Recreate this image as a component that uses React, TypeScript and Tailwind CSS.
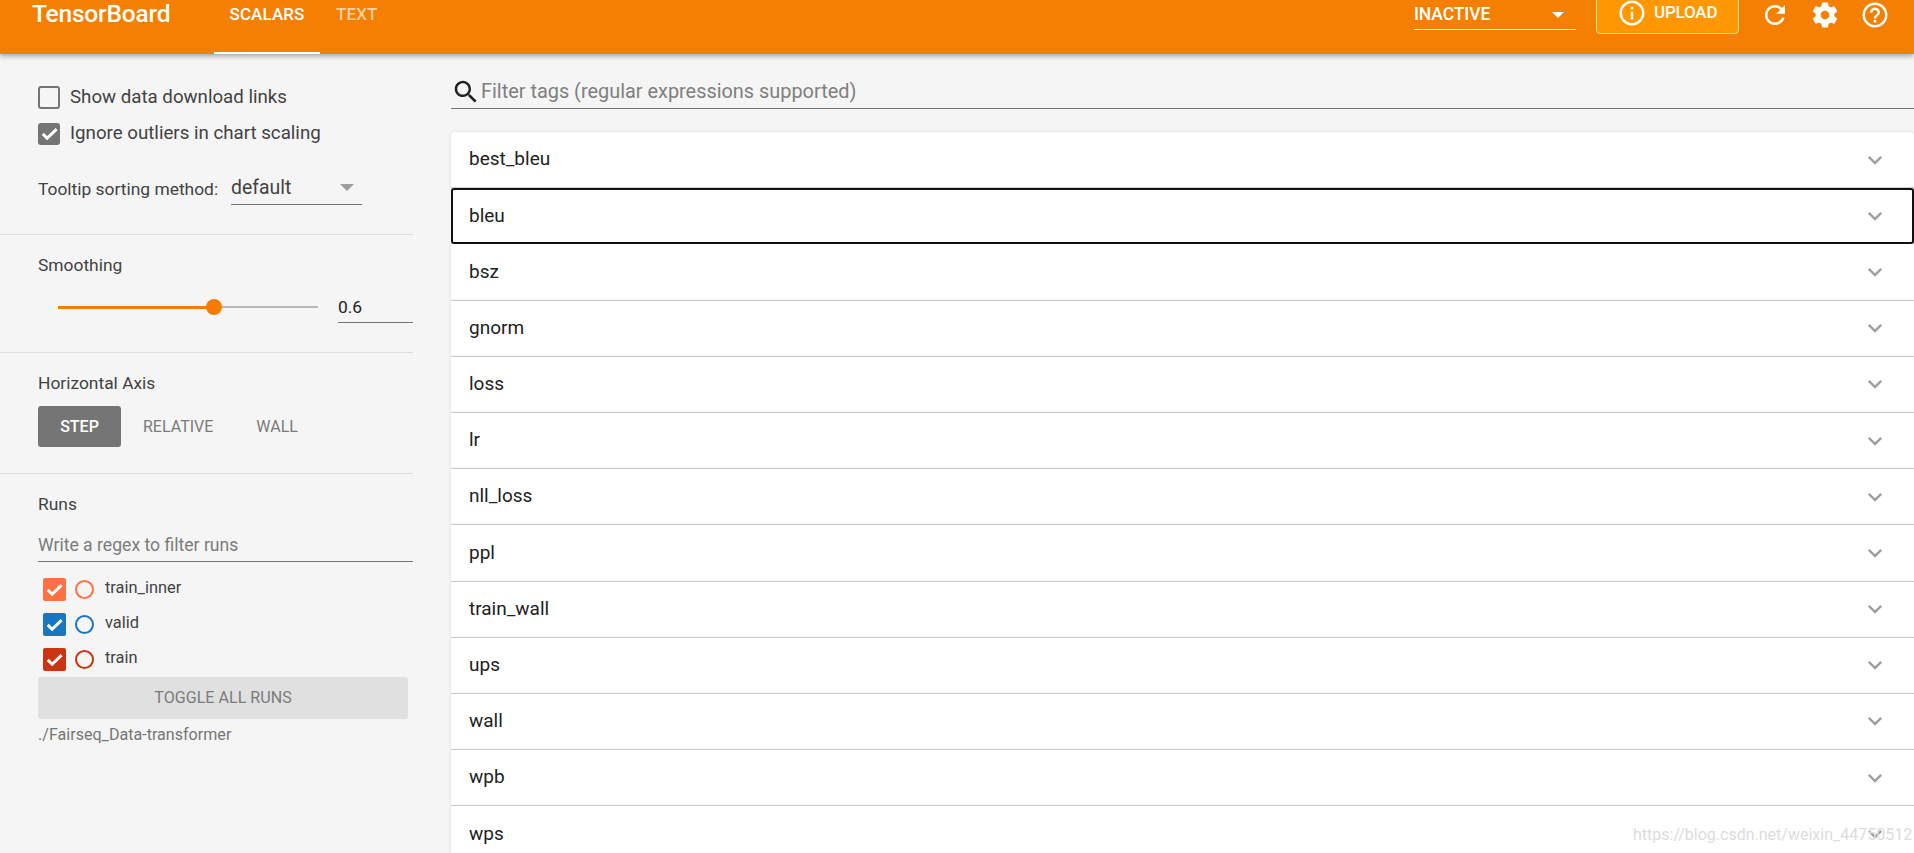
import React from "react";

const P = {
  refresh: "M17.65 6.35C16.2 4.9 14.21 4 12 4c-4.42 0-7.99 3.58-7.99 8s3.57 8 7.99 8c3.73 0 6.84-2.55 7.73-6h-2.08c-.82 2.33-3.04 4-5.65 4-3.31 0-6-2.69-6-6s2.69-6 6-6c1.66 0 3.14.69 4.22 1.78L13 11h7V4l-2.35 2.35z",
  settings: "M19.43 12.98c.04-.32.07-.64.07-.98s-.03-.66-.07-.98l2.11-1.65c.19-.15.24-.42.12-.64l-2-3.46c-.12-.22-.39-.3-.61-.22l-2.49 1c-.52-.4-1.08-.73-1.69-.98l-.38-2.65C14.46 2.18 14.25 2 14 2h-4c-.25 0-.46.18-.49.42l-.38 2.65c-.61.25-1.17.59-1.69.98l-2.49-1c-.23-.09-.49 0-.61.22l-2 3.46c-.13.22-.07.49.12.64l2.11 1.65c-.04.32-.07.65-.07.98s.03.66.07.98l-2.11 1.65c-.19.15-.24.42-.12.64l2 3.46c.12.22.39.3.61.22l2.49-1c.52.4 1.08.73 1.69.98l.38 2.65c.03.24.24.42.49.42h4c.25 0 .46-.18.49-.42l.38-2.65c.61-.25 1.17-.59 1.69-.98l2.49 1c.23.09.49 0 .61-.22l2-3.46c.12-.22.07-.49-.12-.64l-2.11-1.65zM12 15.5c-1.93 0-3.5-1.57-3.5-3.5s1.57-3.5 3.5-3.5 3.5 1.57 3.5 3.5-1.57 3.5-3.5 3.5z",
  help: "M11 18h2v-2h-2v2zm1-16C6.48 2 2 6.48 2 12s4.48 10 10 10 10-4.48 10-10S17.52 2 12 2zm0 18c-4.41 0-8-3.59-8-8s3.59-8 8-8 8 3.59 8 8-3.59 8-8 8zm0-14c-2.21 0-4 1.79-4 4h2c0-1.1.9-2 2-2s2 .9 2 2c0 2-3 1.75-3 5h2c0-2.25 3-2.5 3-5 0-2.21-1.79-4-4-4z",
  info: "M11 17h2v-6h-2v6zm1-15C6.48 2 2 6.48 2 12s4.48 10 10 10 10-4.48 10-10S17.52 2 12 2zm0 18c-4.41 0-8-3.59-8-8s3.59-8 8-8 8 3.59 8 8-3.59 8-8 8zM11 9h2V7h-2v2z",
  search: "M15.5 14h-.79l-.28-.27C15.41 12.59 16 11.11 16 9.5 16 5.91 13.09 3 9.5 3S3 5.91 3 9.5 5.91 16 9.5 16c1.61 0 3.09-.59 4.23-1.57l.27.28v.79l5 4.99L20.49 19l-4.99-5zm-6 0C7.01 14 5 11.99 5 9.5S7.01 5 9.5 5 14 7.01 14 9.5 11.99 14 9.5 14z",
  expand: "M16.59 8.59L12 13.17 7.41 8.59 6 10l6 6 6-6z",
};

function Icon({ d, className }: { d: string; className: string }) {
  return (
    <svg viewBox="0 0 24 24" className={className} fill="currentColor">
      <path d={d} />
    </svg>
  );
}

function Check({ className }: { className: string }) {
  return (
    <svg viewBox="0 0 24 24" className={className} fill="none" stroke="currentColor" strokeWidth="3.8">
      <path d="M3.5 12.5l5.5 5.5L21 6.5" />
    </svg>
  );
}

const tags = ["best_bleu", "bleu", "bsz", "gnorm", "loss", "lr", "nll_loss", "ppl", "train_wall", "ups", "wall", "wpb", "wps"];

const runs = [
  { name: "train_inner", box: "bg-[#ff7043]", ring: "border-[#ff7043]" },
  { name: "valid", box: "bg-[#1976c0]", ring: "border-[#1976c0]" },
  { name: "train", box: "bg-[#cc3311]", ring: "border-[#cc3311]" },
];

function Header() {
  return (
    <header className="relative z-10 flex h-[54px] shrink-0 items-start overflow-hidden bg-[#f57f00] text-white shadow-[0_2px_5px_rgba(0,0,0,0.35)]">
      <div className="ml-[32px] w-[182px] text-[24.5px] font-medium leading-[28px] tracking-[-0.2px]">TensorBoard</div>
      <div className="flex h-[54px] w-[106px] justify-center border-b-[2px] border-white pt-[4px] text-[17px] font-medium leading-[20px] tracking-[0.1px]">SCALARS</div>
      <div className="ml-[16px] pt-[4px] text-[17px] font-medium leading-[20px] tracking-[0.1px] text-[#fbd0a3]">TEXT</div>
      <div className="flex-1" />
      <div className="flex h-[30px] w-[162px] items-center justify-between border-b border-white pr-[12px] text-[17.5px] font-medium tracking-[-0.1px]">
        <span>INACTIVE</span>
        <span className="h-0 w-0 border-x-[6px] border-t-[6px] border-x-transparent border-t-white" />
      </div>
      <div className="ml-[20px] mt-[-6px] flex h-[40px] w-[143px] items-center rounded-[4px] border border-[#ffd9a0] bg-[#ff9800] pl-[20px]">
        <Icon d={P.info} className="mt-[-2px] h-[30px] w-[30px]" />
        <span className="ml-[7px] mt-[-2px] text-[17px] font-medium tracking-[-0.2px]">UPLOAD</span>
      </div>
      <Icon d={P.refresh} className="ml-[21px] h-[30px] w-[30px]" />
      <Icon d={P.settings} className="ml-[20px] h-[30px] w-[30px]" />
      <Icon d={P.help} className="ml-[20px] h-[30px] w-[30px]" />
      <div className="w-[24px] shrink-0" />
    </header>
  );
}

function Sidebar() {
  return (
    <aside className="flex w-[413px] shrink-0 flex-col text-[#424242]">
      <div className="flex h-[181px] flex-col border-b-[1px] border-[#dcdcdc] pl-[38px] pt-[32px]">
        <label className="flex h-[23px] items-center text-[18.7px] leading-[23px]">
          <span className="h-[23px] w-[22px] rounded-[3px] border-[2px] border-[#757575]" />
          <span className="ml-[10px]">Show data download links</span>
        </label>
        <label className="mt-[13px] flex h-[23px] items-center text-[18.7px] leading-[23px]">
          <span className="flex h-[22px] w-[22px] items-center justify-center rounded-[3px] bg-[#757575] text-white">
            <Check className="h-[19px] w-[19px]" />
          </span>
          <span className="ml-[10px]">Ignore outliers in chart scaling</span>
        </label>
        <div className="mt-[21px] flex">
          <span className="mt-[11px] w-[193px] text-[17.4px] leading-[24px]">Tooltip sorting method:</span>
          <span className="flex h-[39px] w-[131px] items-start justify-between border-b border-[#757575] pr-[8px] text-[19.4px] leading-[30px]">
            <span className="mt-[7px]">default</span>
            <span className="mt-[18px] h-0 w-0 border-x-[7px] border-t-[7px] border-x-transparent border-t-[#9e9e9e]" />
          </span>
        </div>
      </div>
      <div className="flex h-[118px] flex-col border-b-[1px] border-[#dcdcdc] pl-[38px] pt-[18px]">
        <div className="text-[17.4px] leading-[24px]">Smoothing</div>
        <div className="mt-[17px] flex items-start">
          <div className="relative ml-[20px] mt-[12px] h-[2px] w-[260px] bg-[#b7b7b7]">
            <div className="h-[3px] w-[155px] bg-[#f57c00]" />
            <div className="absolute left-[148px] top-[-7px] h-[16px] w-[16px] rounded-full bg-[#f57c00]" />
          </div>
          <div className="ml-[20px] h-[29px] flex-1 border-b border-[#757575] pt-[1px] text-[17.4px] leading-[24px] text-[#212121]">0.6</div>
        </div>
      </div>
      <div className="flex h-[121px] flex-col border-b-[1px] border-[#dcdcdc] pl-[38px] pt-[18px]">
        <div className="text-[17.4px] leading-[24px]">Horizontal Axis</div>
        <div className="mt-[11px] flex items-center text-[16px]">
          <span className="flex h-[41px] w-[83px] items-center justify-center rounded-[3px] bg-[#757575] font-medium text-white">STEP</span>
          <span className="ml-[22px] text-[#7b7b7b]">RELATIVE</span>
          <span className="ml-[43px] text-[#7b7b7b]">WALL</span>
        </div>
      </div>
      <div className="flex flex-col pl-[38px] pt-[18px]">
        <div className="text-[17.4px] leading-[24px]">Runs</div>
        <div className="mt-[15px] h-[31px] border-b border-[#757575] pt-[2px] text-[17.6px] leading-[24px] text-[#7b7b7b]">Write a regex to filter runs</div>
        <div className="mt-[16px] flex flex-col gap-[12px] pl-[5px]">
          {runs.map((r) => (
            <div key={r.name} className="flex h-[23px] items-center">
              <span className={`flex h-[23px] w-[23px] items-center justify-center rounded-[2px] text-white ${r.box}`}>
                <Check className="h-[19px] w-[19px]" />
              </span>
              <span className={`ml-[9px] h-[19px] w-[19px] rounded-full border-[2px] ${r.ring}`} />
              <span className="ml-[11px] mt-[-3px] text-[16.4px] leading-[20px] text-[#424242]">{r.name}</span>
            </div>
          ))}
        </div>
        <div className="mt-[6px] flex h-[42px] w-[370px] items-center justify-center rounded-[3px] bg-[#e0e0e0] text-[16.1px] text-[#7b7b7b]">TOGGLE ALL RUNS</div>
        <div className="mt-[6px] text-[16.1px] leading-[20px] text-[#757575]">./Fairseq_Data-transformer</div>
      </div>
    </aside>
  );
}

function Main() {
  return (
    <main className="ml-[38px] flex min-w-0 flex-1 flex-col">
      <div className="flex h-[55px] shrink-0 items-center border-b border-[#757575] pt-[22px] text-[19.9px] text-[#7f7f7f]">
        <Icon d={P.search} className="h-[30px] w-[30px] shrink-0 text-[#212121]" />
        <span>Filter tags (regular expressions supported)</span>
      </div>
      <div className="mt-[23px] flex flex-col">
        {tags.map((t, i) => (
          <div
            key={t}
            className={`flex h-[56.2px] shrink-0 items-center justify-between bg-white pl-[18px] pr-[25px] text-[19px] text-[#212121] ${
              t === "bleu"
                ? "relative z-[1] rounded-[3px] border-[2px] border-[#111]"
                : "border-b-[1.5px] border-[#d0d0d0] shadow-[0_0_3px_rgba(0,0,0,0.12)]"
            } ${i === 0 ? "rounded-t-[3px]" : ""}`}
          >
            <span className={t === "bleu" ? "ml-[-2px]" : ""}>{t}</span>
            <Icon d={P.expand} className={`h-[28px] w-[28px] text-[#9e9e9e] ${t === "bleu" ? "mr-[-2px]" : ""}`} />
          </div>
        ))}
      </div>
    </main>
  );
}

export default function App() {
  return (
    <div className="relative flex h-[853px] w-[1914px] flex-col overflow-hidden bg-[#f5f5f5] font-['Roboto',sans-serif]">
      <Header />
      <div className="flex min-h-0 flex-1">
        <Sidebar />
        <Main />
      </div>
      <div className="absolute left-[1633px] top-[823px] text-[16px] leading-[24px] text-[#dcdcdc]">https://blog.csdn.net/weixin_44750512</div>
    </div>
  );
}
